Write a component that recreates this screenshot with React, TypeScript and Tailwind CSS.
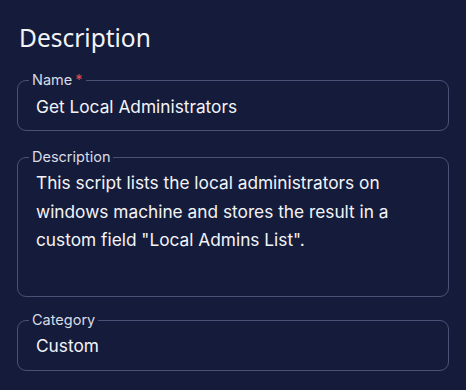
import React from 'react';

function Field({
  label,
  required,
  children,
  className,
}: {
  label: string;
  required?: boolean;
  children: React.ReactNode;
  className: string;
}) {
  return (
    <fieldset
      className={`mx-[17px] rounded-[9px] border border-[#4a5177] px-[18px] ${className}`}
    >
      <legend className="ml-[-7px] px-[3px] text-[14.5px] leading-[16px] text-[#d9dbe6]">
        {label}
        {required && <span className="ml-[3px] text-[#e5484d]">*</span>}
      </legend>
      {children}
    </fieldset>
  );
}

export default function App() {
  return (
    <div className="min-h-[390px] w-[466px] bg-[#151c3b] pt-[21px] font-['Inter','Noto_Sans',sans-serif] text-[#f3f4f8]">
      <h2 className="pl-[19px] font-['Noto_Sans',sans-serif] text-[24.5px] leading-[34px]">
        Description
      </h2>
      <div className="mt-[17px] flex flex-col">
        <Field label="Name" required className="h-[59px]">
          <div className="pt-[7px] text-[17.3px] leading-[24px]">
            Get Local Administrators
          </div>
        </Field>
        <Field label="Description" className="mt-[18px] h-[148px]">
          <p className="pt-[4px] text-[17.3px] leading-[28.5px]">
            This script lists the local administrators on windows machine and
            stores the result in a custom field "Local Admins List".
          </p>
        </Field>
        <Field label="Category" className="mt-[15px] h-[59px]">
          <div className="pt-[6px] text-[17.3px] leading-[24px]">Custom</div>
        </Field>
      </div>
    </div>
  );
}
